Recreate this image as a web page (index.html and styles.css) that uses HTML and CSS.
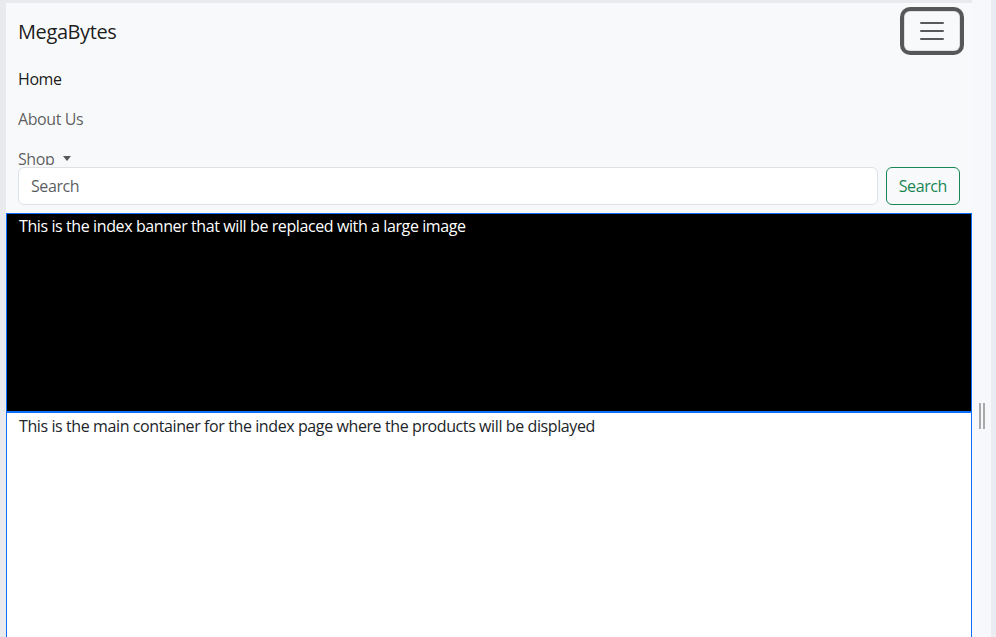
FILE: index.html
```html
<!DOCTYPE html>
<html lang="en">
<head>
<meta charset="utf-8">
<title>MegaBytes</title>
<link rel="stylesheet" href="styles.css">
</head>
<body>
<div class="frame">
  <div class="edge-left"></div>
  <div class="viewport">
    <nav class="navbar">
      <div class="nav-inner">
        <div class="brand-row">
          <a class="brand" href="#">MegaBytes</a>
          <button class="toggler" type="button" aria-label="Toggle navigation">
            <svg class="toggler-icon" width="30" height="30" viewBox="0 0 30 30"><path stroke="rgba(33,37,41,0.75)" stroke-linecap="round" stroke-miterlimit="10" stroke-width="2" d="M4 7h22M4 15h22M4 23h22"/></svg>
          </button>
        </div>
        <div class="collapse-area">
          <ul class="nav-list">
            <li><a class="nav-link active" href="#">Home</a></li>
            <li><a class="nav-link" href="#">About Us</a></li>
            <li><a class="nav-link dropdown" href="#">Shop</a></li>
          </ul>
        </div>
        <form class="search">
          <input class="search-input" type="search" placeholder="Search">
          <button class="search-btn" type="button">Search</button>
        </form>
      </div>
    </nav>
    <div class="banner">This is the index banner that will be replaced with a large image</div>
    <div class="main">This is the main container for the index page where the products will be displayed</div>
  </div>
  <div class="splitter"><span class="grip"></span></div>
  <div class="edge-right"></div>
</div>
</body>
</html>
```
FILE: styles.css
```css
* { box-sizing: border-box; }
html, body { margin: 0; padding: 0; height: 100%; overflow: hidden; }
body {
  font-family: "Open Sans", "Noto Sans", sans-serif;
  font-size: 16px;
  line-height: 24px;
  letter-spacing: -0.025em;
  color: #212529;
  background: #e9eaee;
}
.frame { display: flex; height: 637px; overflow: hidden; background: #e9eaee; }
.edge-left { width: 6px; flex: none; }
.viewport { width: 966px; flex: none; margin-top: 3px; display: flex; flex-direction: column; }
.splitter { width: 19px; flex: none; background: #f7f8fb; padding-top: 403px; padding-left: 7px; }
.grip { display: block; width: 6px; height: 26px; border-left: 2px solid #a9a9a9; border-right: 2px solid #a9a9a9; }
.edge-right { width: 5px; flex: none; background: #ebecf2; }

.navbar { background: #f8f9fa; padding: 8px 0; }
.nav-inner { padding: 0 12px; }
.brand-row { display: flex; align-items: center; justify-content: space-between; }
.brand { font-size: 20px; line-height: 30px; padding: 6px 0 4px; color: rgba(0,0,0,0.9); text-decoration: none; }
.toggler {
  width: 56px; height: 40px; padding: 4px 12px; border: 1px solid rgba(0,0,0,0.1);
  border-radius: 6px; background: transparent; box-shadow: 0 0 0 4px rgba(0,0,0,0.65);
  display: flex; align-items: center; justify-content: center;
}
.toggler-icon { display: block; }
.collapse-area { height: 114px; padding-top: 8px; overflow: hidden; }
.nav-list { list-style: none; margin: 0; padding: 0; display: flex; flex-direction: column; }
.nav-link { display: block; padding: 8px 0; color: rgba(0,0,0,0.65); text-decoration: none; }
.nav-link.active { color: rgba(0,0,0,0.9); }
.dropdown::after {
  content: ""; display: inline-block; margin-left: 9px; vertical-align: 4px;
  border-top: 5px solid; border-left: 4px solid transparent; border-right: 4px solid transparent;
}
.search { display: flex; gap: 8px; margin-top: 2px; }
.search-input {
  flex: 1; height: 38px; padding: 6px 12px; font: inherit; letter-spacing: inherit; color: #212529;
  background: #fff; border: 1px solid #dee2e6; border-radius: 6px; outline: none;
}
.search-input::placeholder { color: rgba(33,37,41,0.75); }
.search-btn {
  height: 38px; padding: 6px 12px; font: inherit; letter-spacing: inherit; color: #198754; background: transparent;
  border: 1px solid #198754; border-radius: 6px;
}
.banner { height: 199px; flex: none; background: #000; color: #fff; border: 1px solid #0d6efd; padding: 0 12px; }
.main { height: 400px; flex: none; background: #fff; border: 1px solid #0d6efd; padding: 1px 12px 0; }
```
